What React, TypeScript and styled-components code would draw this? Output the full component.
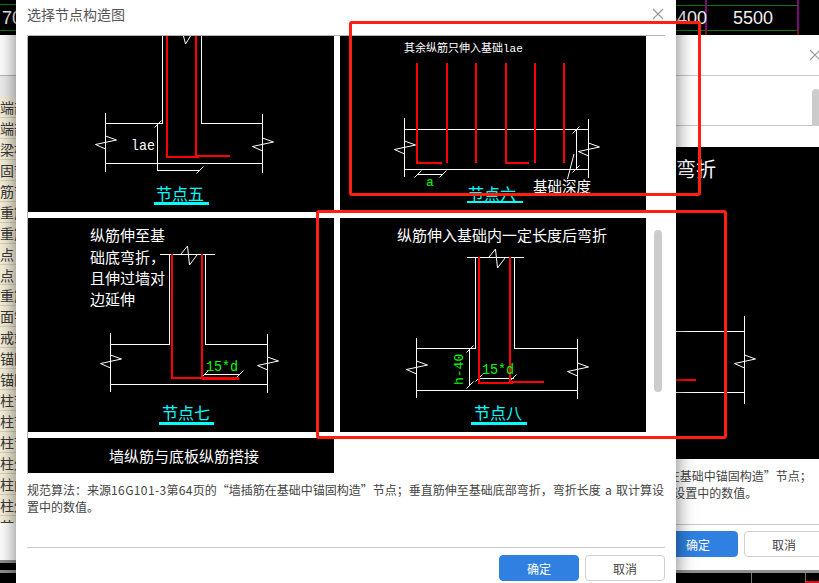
import styled, { createGlobalStyle } from 'styled-components';

const CJK = `"Noto Sans CJK SC", "Liberation Sans", sans-serif`;

const GlobalStyle = createGlobalStyle`
    html, body {
        margin: 0;
        padding: 0;
        background: #fff;
    }
    * {
        box-sizing: border-box;
    }
`;

const Desktop = styled.div`
    position: relative;
    width: 819px;
    height: 583px;
    overflow: hidden;
    display: grid;
    grid-template-rows: 35px 535px 13px;
    font-family: ${CJK};
`;

const TopStrip = styled.svg`
    display: block;
    width: 819px;
    height: 35px;
    background: #000;
`;

const StripText = styled.text`
    font-family: 'Liberation Sans', sans-serif;
    font-size: 18px;
    fill: #eee;
`;

const Middle = styled.div`
    display: flex;
    justify-content: space-between;
    min-height: 0;
`;

const ListPanel = styled.div`
    width: 16px;
    display: flex;
    flex-direction: column;
    background: #fff;
    overflow: hidden;
`;

const ListHead = styled.div`
    height: 41px;
    flex: none;
    border-bottom: 1px solid #b8b8b8;
`;

const ListCaption = styled.div`
    height: 21px;
    flex: none;
    background: #eeeeee;
`;

const ListRow = styled.div<{ $shift: number }>`
    height: 20.95px;
    flex: none;
    padding-left: ${(p) => p.$shift}px;
    background: #f6f0da;
    border-bottom: 1px solid #d9d2ba;
    font-size: 14px;
    line-height: 20px;
    color: #3a3a3a;
    white-space: nowrap;
`;

const ListTail = styled.div`
    height: 7px;
    flex: none;
    padding-left: 0;
    overflow: hidden;
    background: #f6f0da;
    font-size: 14px;
    line-height: 20px;
    color: #3a3a3a;
    white-space: nowrap;
`;

const ListFoot = styled.div`
    margin-top: auto;
    height: 10px;
    flex: none;
    background: #000;
    border-top: 3px solid #8f8f8f;
`;

const BottomStrip = styled.div`
    display: flex;
    justify-content: flex-end;
    background: #000;
    border-top: 3px solid #8f8f8f;
`;

const GridCell = styled.div<{ $w: number }>`
    width: ${(p) => p.$w}px;
    border-left: 1px solid #777;
`;

const CornerCell = styled(GridCell)`
    border-bottom: 2px solid #e01010;
`;

const BackDialog = styled.div`
    width: 416px;
    margin-right: -16px;
    display: flex;
    flex-direction: column;
    background: #fff;
    padding-left: 11px;
`;

const BackHeader = styled.div`
    position: relative;
    height: 41px;
    flex: none;
    margin-left: -11px;
    border-bottom: 1px solid #c8c8c8;
`;

const BackClose = styled.svg`
    position: absolute;
    right: 14px;
    top: 14px;
    width: 12px;
    height: 12px;
    stroke: #999;
    stroke-width: 1.2;
`;

const BackScroll = styled.div`
    position: relative;
    height: 50px;
    flex: none;
    margin-left: -11px;
    border-bottom: 1px solid #c8c8c8;
`;

const BackThumb = styled.div`
    position: absolute;
    left: 393px;
    top: 13px;
    width: 8px;
    height: 37px;
    border-radius: 4px 4px 0 0;
    background: #cccccc;
`;

const BackImage = styled.svg`
    display: block;
    flex: none;
    width: 396px;
    height: 312px;
    margin-top: 21px;
    background: #000;
`;

const BackImageText = styled.text`
    font-family: ${CJK};
    font-size: 20px;
    fill: #fff;
`;

const BackNote = styled.p`
    margin: 8px 0 0;
    height: 57px;
    flex: none;
    font-size: 12px;
    line-height: 17px;
    word-spacing: 1.5px;
    color: #444;
    white-space: nowrap;
`;

const BackFooter = styled.div`
    display: flex;
    gap: 6px;
    margin-left: -11px;
    padding: 6px 0 0 239px;
    border-top: 1px solid #c8c8c8;
`;

const Dialog = styled.div`
    position: absolute;
    left: 16px;
    top: 0;
    width: 660px;
    height: 583px;
    display: flex;
    flex-direction: column;
    padding: 0 11px;
    background: #fff;
    box-shadow: 0 0 18px rgba(0, 0, 0, 0.55);
`;

const TitleBar = styled.div`
    height: 35px;
    flex: none;
    display: flex;
    align-items: center;
    justify-content: space-between;
    padding-right: 1px;
`;

const Title = styled.div`
    font-size: 14px;
    color: #555;
    padding-bottom: 7px;
`;

const CloseIcon = styled.svg`
    width: 12px;
    height: 12px;
    margin-bottom: 7px;
    stroke: #999;
    stroke-width: 1.2;
`;

const Gallery = styled.div`
    position: relative;
    height: 439px;
    flex: none;
    border-top: 1px solid #b4b4b4;
    border-left: 1px solid #b4b4b4;
    display: grid;
    grid-template-columns: 306px 306px;
    grid-template-rows: 176px 214px 35px;
    column-gap: 6px;
    row-gap: 6px;
    align-content: start;
`;

const Cell = styled.svg`
    display: block;
    background: #000;
`;

const Wire = styled.path`
    fill: none;
    stroke: #fff;
    stroke-width: 1;
    shape-rendering: crispEdges;
`;

const Slanted = styled.path`
    fill: none;
    stroke: #fff;
    stroke-width: 1;
`;

const Rebar = styled.path<{ $w?: number }>`
    fill: none;
    stroke: #ff0000;
    stroke-width: ${(p) => p.$w ?? 2};
    shape-rendering: crispEdges;
`;

const NodeName = styled.text`
    font-family: ${CJK};
    font-size: 16px;
    fill: #00ffff;
`;

const NameBar = styled.rect`
    fill: #00ffff;
`;

const Caption = styled.text<{ $size?: number }>`
    font-family: ${CJK};
    font-size: ${(p) => p.$size ?? 15}px;
    fill: #fff;
`;

const MonoSpan = styled.tspan`
    font-family: 'Liberation Mono', monospace;
`;

const MonoLabel = styled.text<{ $green?: boolean; $size?: number }>`
    font-family: 'Liberation Mono', monospace;
    font-size: ${(p) => p.$size ?? 15}px;
    fill: ${(p) => (p.$green ? '#00ff00' : '#fff')};
`;

const PlainCell = styled.div`
    background: #000;
    color: #fff;
    font-size: 15px;
    line-height: 35px;
    text-align: center;
    padding-left: 6px;
    white-space: nowrap;
`;

const Thumb = styled.div`
    position: absolute;
    left: 626px;
    top: 194px;
    width: 8px;
    height: 162px;
    border-radius: 4px;
    background: #cccccc;
`;

const Note = styled.p`
    margin: 7px 0 0;
    height: 66px;
    flex: none;
    font-size: 12px;
    line-height: 17px;
    word-spacing: 1.5px;
    color: #444;
`;

const Latin = styled.span`
    letter-spacing: 0.4px;
`;

const Footer = styled.div`
    display: flex;
    justify-content: flex-end;
    gap: 6px;
    padding-top: 7px;
    border-top: 1px solid #c8c8c8;
`;

const Button = styled.button<{ $primary?: boolean }>`
    width: 80px;
    height: 26px;
    padding: 0;
    border-radius: 4px;
    border: 1px solid ${(p) => (p.$primary ? '#2f80e0' : '#d0d0d0')};
    background: ${(p) => (p.$primary ? '#2f80e0' : '#fff')};
    color: ${(p) => (p.$primary ? '#fff' : '#444')};
    font-family: ${CJK};
    font-size: 12px;
`;

const Annotation = styled.div<{ $x: number; $y: number; $w: number; $h: number }>`
    position: absolute;
    left: ${(p) => p.$x}px;
    top: ${(p) => p.$y}px;
    width: ${(p) => p.$w}px;
    height: ${(p) => p.$h}px;
    border: 3px solid #ff2012;
    border-radius: 3px;
`;

const SideBreak = ({ x, y }: { x: number; y: number }) => (
    <Slanted d={`M${x} ${y + 7}L${x - 10} ${y + 2.5}L${x + 11} ${y - 2}L${x} ${y - 6}`} />
);

const TopBreak = ({ x, y }: { x: number; y: number }) => (
    <Slanted d={`M${x} ${y}L${x + 6.5} ${y - 8}L${x + 8.5} ${y + 11}L${x + 16} ${y + 1}`} />
);

const Tick = ({ x, y }: { x: number; y: number }) => (
    <Slanted d={`M${x - 3.5} ${y + 3.5}L${x + 3.5} ${y - 3.5}`} />
);

const NodeFive = () => (
    <Cell viewBox="28 36 306 176" width={306} height={176}>
        <Wire d="M162.5 36V123.5H105.5M105.5 113V172M201.5 36V123.5H262.5M262.5 114V173M105.5 163.5H262.5" />
        <Wire d="M157.5 123.5V170.5H200" />
        <Slanted d="M183.5 36L185.5 44L190.5 36" />
        <Tick x={158} y={124} />
        <Tick x={200} y={170} />
        <SideBreak x={105.5} y={142} />
        <SideBreak x={262.5} y={144} />
        <Rebar d="M167 36V157H199" />
        <Rebar d="M196 36V156H230" />
        <MonoLabel x={131} y={150} textLength={24} lengthAdjust="spacingAndGlyphs">lae</MonoLabel>
        <NodeName x={156} y={200}>节点五</NodeName>
        <NameBar x={154} y={202} width={55} height={3} />
    </Cell>
);

const NodeSix = () => (
    <Cell viewBox="340 36 306 176" width={306} height={176}>
        <Caption x={404} y={52} $size={11}>其余纵筋只伸入基础<MonoSpan>lae</MonoSpan></Caption>
        <Wire d="M404.5 118V177M588.5 119V178M404.5 129.5H588.5M404.5 169.5H588.5M576.5 129.5V170M418 174.5H443" />
        <Slanted d="M574 154L567.5 179" />
        <Tick x={576} y={130} />
        <Tick x={576} y={169} />
        <Tick x={418} y={174} />
        <Tick x={443} y={174} />
        <SideBreak x={404.5} y={147} />
        <SideBreak x={588.5} y={149} />
        <Rebar d="M417 63V163H442M506 63V163H529" />
        <Rebar d="M447 63V163M476 63V163M535 63V163M564 63V163" />
        <MonoLabel x={426} y={186} $green $size={13}>a</MonoLabel>
        <Caption x={533} y={192} $size={14.5}>基础深度</Caption>
        <NodeName x={468} y={200}>节点六</NodeName>
        <NameBar x={467} y={201} width={56} height={2} />
    </Cell>
);

const NodeSeven = () => (
    <Cell viewBox="28 218 306 214" width={306} height={214}>
        <Caption x={90} y={241}>纵筋伸至基</Caption>
        <Caption x={90} y={263}>础底弯折，</Caption>
        <Caption x={90} y={284}>且伸过墙对</Caption>
        <Caption x={90} y={305}>边延伸</Caption>
        <Wire d="M160 254.5H215M169.5 254.5V344.5H110.5M205.5 254.5V344.5H267.5M110.5 333V392M267.5 334V393M110.5 384.5H267.5M204 374.5H240" />
        <TopBreak x={181} y={254} />
        <Tick x={205} y={374} />
        <Tick x={240} y={374} />
        <SideBreak x={110.5} y={361} />
        <SideBreak x={267.5} y={363} />
        <Rebar d="M172 254V378H239" />
        <Rebar d="M202 254V378" />
        <Rebar d="M202 378.5H239" />
        <MonoLabel x={206} y={371} $green textLength={32} lengthAdjust="spacingAndGlyphs">15*d</MonoLabel>
        <NodeName x={162} y={419}>节点七</NodeName>
        <NameBar x={159} y={422} width={55} height={3} />
    </Cell>
);

const NodeEight = () => (
    <Cell viewBox="340 218 306 214" width={306} height={214}>
        <Caption x={397} y={241}>纵筋伸入基础内一定长度后弯折</Caption>
        <Wire d="M467 257.5H524M475.5 257.5V348.5H416.5M514.5 257.5V348.5H577.5M416.5 338V398M577.5 339V399M416.5 390.5H577.5M469.5 348.5V386M478 378.5H514" />
        <TopBreak x={489} y={257} />
        <Tick x={470} y={349} />
        <Tick x={470} y={385} />
        <Tick x={479} y={378} />
        <Tick x={513} y={378} />
        <SideBreak x={416.5} y={367} />
        <SideBreak x={577.5} y={369} />
        <Rebar d="M479 257V383H513" />
        <Rebar d="M510 257V382H544" />
        <MonoLabel x={482} y={374} $green textLength={32} lengthAdjust="spacingAndGlyphs">15*d</MonoLabel>
        <MonoLabel transform="rotate(-90 463 385)" x={463} y={385} $green $size={13}>h-40</MonoLabel>
        <NodeName x={474} y={419}>节点八</NodeName>
        <NameBar x={471} y={422} width={56} height={3} />
    </Cell>
);

const listRows: [string, number][] = [
    ['端部', -1],
    ['端部', -1],
    ['梁柱', -1],
    ['固节', -4],
    ['筋节', -5],
    ['重筋', -3],
    ['重筋', -3],
    ['点', 0],
    ['点', -1],
    ['重筋', -3],
    ['面锚', -2],
    ['戒端', -3],
    ['锚固', -3],
    ['锚固', -3],
    ['柱节', -3],
    ['柱节', -3],
    ['柱节', -3],
    ['柱外', -3],
    ['柱内', -3],
    ['柱外', -3],
];

const CrossPath = () => <path d="M1 1L11 11M11 1L1 11" fill="none" />;

const NoteHead = () => (
    <>
        规范算法：来源<Latin>16G101-3</Latin>第<Latin>64</Latin>页的“墙插筋在基础中锚固构造”节点；
    </>
);

const NoteTail = () => <>垂直筋伸至基础底部弯折，弯折长度 a 取计算设置中的数值。</>;

const App = () => (
    <>
        <GlobalStyle />
        <Desktop>
            <TopStrip viewBox="0 0 819 35">
                <path d="M0 4.5H16M0 30.5H16M660 5.5H798M660 30.5H798" stroke="#0a7a0a" fill="none" />
                <path d="M706 0V30M798 0V30" stroke="#a010a0" strokeWidth={1.5} fill="none" />
                <path d="M706 30V35M798 30V35" stroke="#b01010" strokeWidth={1.5} fill="none" />
                <StripText x={2} y={24}>70</StripText>
                <StripText x={667} y={24}>5400</StripText>
                <StripText x={733} y={24}>5500</StripText>
            </TopStrip>
            <Middle>
                <ListPanel>
                    <ListHead />
                    <ListCaption />
                    {listRows.map(([label, shift], index) => (
                        <ListRow key={index} $shift={shift}>{label}</ListRow>
                    ))}
                    <ListTail>节点</ListTail>
                    <ListFoot />
                </ListPanel>
                <BackDialog>
                    <BackHeader>
                        <BackClose viewBox="0 0 12 12"><CrossPath /></BackClose>
                    </BackHeader>
                    <BackScroll>
                        <BackThumb />
                    </BackScroll>
                    <BackImage viewBox="430 148 396 312">
                        <BackImageText x={716} y={178} textAnchor="end">弯折</BackImageText>
                        <Wire d="M600 332.5H744.5M600 393.5H744.5M744.5 317V405" />
                        <SideBreak x={744.5} y={362} />
                        <Rebar d="M600 381H696" />
                    </BackImage>
                    <BackNote>
                        <NoteHead />
                        <br />
                        <NoteTail />
                    </BackNote>
                    <BackFooter>
                        <Button $primary>确定</Button>
                        <Button>取消</Button>
                    </BackFooter>
                </BackDialog>
            </Middle>
            <BottomStrip>
                <GridCell $w={54} />
                <CornerCell $w={14} />
            </BottomStrip>

            <Dialog>
                <TitleBar>
                    <Title>选择节点构造图</Title>
                    <CloseIcon viewBox="0 0 12 12"><CrossPath /></CloseIcon>
                </TitleBar>
                <Gallery>
                    <NodeFive />
                    <NodeSix />
                    <NodeSeven />
                    <NodeEight />
                    <PlainCell>墙纵筋与底板纵筋搭接</PlainCell>
                    <Thumb />
                </Gallery>
                <Note>
                    <NoteHead />
                    <NoteTail />
                </Note>
                <Footer>
                    <Button $primary>确定</Button>
                    <Button>取消</Button>
                </Footer>
            </Dialog>

            <Annotation $x={349} $y={21} $w={352} $h={175} />
            <Annotation $x={316} $y={210} $w={411} $h={229} />
        </Desktop>
    </>
);

export default App;
